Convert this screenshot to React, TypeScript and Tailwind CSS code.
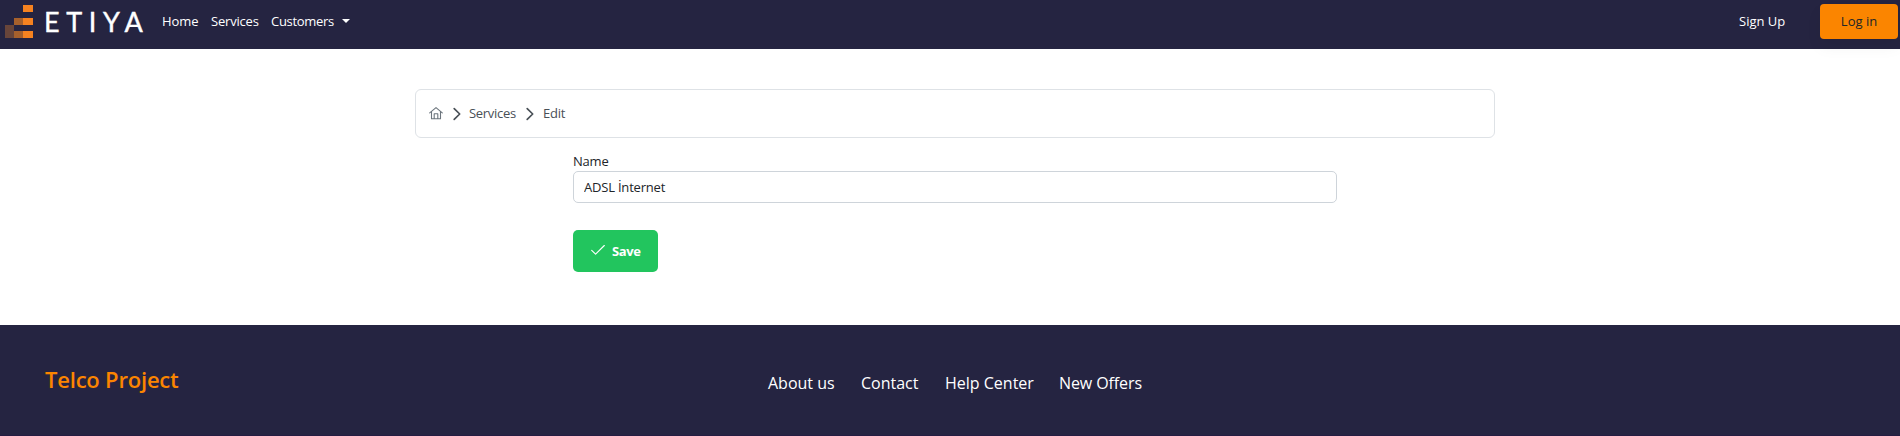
const T = ({ children, className }: { children: string; className: string }) => (
  <span className={`block whitespace-nowrap ${className}`}>{children}</span>
);

const Chevron = () => (
  <svg className="h-[14px] w-[14px] shrink-0" viewBox="0 0 14 14" fill="none" stroke="#495057" strokeWidth="1.7" strokeLinecap="round" strokeLinejoin="round">
    <path d="M4.2 1.7 9.7 7 4.2 12.3" />
  </svg>
);

function Logo() {
  return (
    <div className="flex">
      <svg className="mt-[5px] h-[33px] w-7 shrink-0" viewBox="0 0 28 33" shapeRendering="crispEdges">
        <path fill="#f68220" d="M18 0h10v7H18zM18 13h10v7H18zM18 26h10v7H18z" />
        <path fill="#a6602c" d="M9 13h9v7H9zM9 26h9v7H9z" />
        <path fill="#68453a" d="M0 20h9v13H0z" />
      </svg>
      <span className="ml-[11px] mt-[3px] block w-[100px] whitespace-nowrap font-['Lato'] text-[27px] leading-[38px] tracking-[6.6px] text-white [-webkit-text-stroke:0.4px_#fff]">ETIYA</span>
    </div>
  );
}

export default function App() {
  return (
    <div className="flex h-[436px] flex-col bg-white font-['Open_Sans',sans-serif] text-[13px] leading-[21px] text-[#212529]">
      <header className="flex h-[49px] shrink-0 bg-[#252441] pl-[5px] pr-[2px] text-white">
        <Logo />
        <nav className="ml-[18px] flex pt-[11px]">
          <T className="w-[49px] tracking-[-0.1px]">Home</T>
          <T className="w-[60px] tracking-[-0.2px]">Services</T>
          <T className="w-[71px] tracking-[-0.3px]">Customers</T>
          <svg className="mt-[8px] h-1 w-2" viewBox="0 0 8 4"><path fill="#fff" d="M0 0h8L4 4z" /></svg>
        </nav>
        <T className="ml-auto mr-[33px] w-[48px] pt-[11px]">Sign Up</T>
        <button className="mt-1 flex h-[35px] w-[78px] items-center justify-center rounded-[4px] bg-[#fb8500] text-[#212529] shadow-[0_8px_16px_rgba(0,0,0,0.05)]">
          <T className="">Log in</T>
        </button>
      </header>
      <main className="flex grow flex-col pt-10">
        <nav className="ml-[415px] flex h-[49px] w-[1080px] items-center rounded-[6px] border border-[#dee2e6] pl-[13px] text-[#495057]">
          <svg className="-mt-[2px] h-[14px] w-[14px]" viewBox="0 0 14 14" fill="none" stroke="#6c757d" strokeWidth="1.1" strokeLinecap="round" strokeLinejoin="round">
            <path d="M.7 6.9 7 1.6l6.3 5.3M2.5 5.6v7.2h9V5.6M5.2 12.8V7.8h3.6v5" />
          </svg>
          <span className="ml-[7px] flex"><Chevron /></span>
          <T className="ml-[5px] w-[54px] tracking-[-0.3px]">Services</T>
          <Chevron />
          <T className="ml-[6px] tracking-[-0.2px]">Edit</T>
        </nav>
        <form className="ml-[573px] mt-[13px] w-[764px]">
          <label className="block h-5 tracking-[-0.2px]">Name</label>
          <input className="block h-8 w-full rounded-[5px] border border-[#ced4da] pl-[10px] tracking-[-0.2px] outline-none" defaultValue="ADSL İnternet" />
          <button type="button" className="mt-[27px] flex h-[42px] w-[85px] items-center rounded-[5px] bg-[#22c55e] pl-[18px] font-bold text-white">
            <svg className="-mt-[2px] h-[14px] w-[14px]" viewBox="0 0 14 14" fill="none" stroke="#fff" strokeWidth="1.1" strokeLinecap="round" strokeLinejoin="round"><path d="M.7 7.4 4.6 11.2 13.3 2.5" /></svg>
            <T className="ml-[7px] tracking-[-0.4px]">Save</T>
          </button>
        </form>
      </main>
      <footer className="flex h-[111px] shrink-0 border-b border-[#251c42] bg-[#252441] text-white">
        <h2 className="ml-[45px] w-[723px] pt-[37px] text-[22px] font-semibold leading-[34px] tracking-[-0.2px] text-[#fb8500]">Telco Project</h2>
        <nav className="flex pt-[46px] text-[16px] leading-6">
          <T className="w-[93px]">About us</T>
          <T className="w-[84px]">Contact</T>
          <T className="w-[114px]">Help Center</T>
          <T className="tracking-[-0.1px]">New Offers</T>
        </nav>
      </footer>
    </div>
  );
}
